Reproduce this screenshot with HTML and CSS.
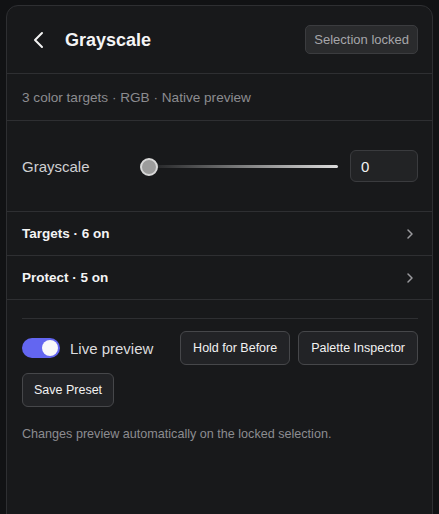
FILE: index.html
```
<!DOCTYPE html>
<html>
<head>
    <title>Grayscale</title>
    <link rel="stylesheet" href="styles.css">
</head>
<body>
    <div class="panel">
        <div class="header">
            <div class="header-left">
                <svg class="back" width="14" height="18" viewBox="0 0 14 18">
                    <path d="M10 2 L3 9 L10 16" fill="none" stroke="#f2f2f2" stroke-width="2" stroke-linecap="round" stroke-linejoin="round"/>
                </svg>
                <h1 class="title">Grayscale</h1>
            </div>
            <span class="badge">Selection locked</span>
        </div>

        <div class="meta">3 color targets · RGB · Native preview</div>

        <div class="slider-row">
            <span class="slider-label">Grayscale</span>
            <div class="slider">
                <div class="track"></div>
                <div class="thumb"></div>
            </div>
            <div class="value-box">0</div>
        </div>

        <div class="nav-row">
            <span>Targets · 6 on</span>
            <svg width="8" height="12" viewBox="0 0 8 12"><path d="M2 2 L6 6 L2 10" fill="none" stroke="#9a9a9e" stroke-width="1.5" stroke-linecap="round" stroke-linejoin="round"/></svg>
        </div>
        <div class="nav-row">
            <span>Protect · 5 on</span>
            <svg width="8" height="12" viewBox="0 0 8 12"><path d="M2 2 L6 6 L2 10" fill="none" stroke="#9a9a9e" stroke-width="1.5" stroke-linecap="round" stroke-linejoin="round"/></svg>
        </div>

        <div class="footer">
            <div class="actions">
                <label class="toggle-wrap">
                    <span class="toggle"><span class="knob"></span></span>
                    <span class="toggle-text">Live preview</span>
                </label>
                <button class="btn">Hold for Before</button>
                <button class="btn">Palette Inspector</button>
            </div>
            <div class="actions">
                <button class="btn btn-narrow">Save Preset</button>
            </div>
            <p class="hint">Changes preview automatically on the locked selection.</p>
        </div>
    </div>
</body>
</html>
```
FILE: styles.css
```
body {
    font-family: "Liberation Sans", Arial, sans-serif;
    background-color: #111214;
    margin: 0;
    padding: 5px 0 0 6px;
    height: 514px;
    box-sizing: border-box;
    overflow: hidden;
}

.panel {
    width: 427px;
    min-height: 530px;
    box-sizing: border-box;
    background-color: #18191b;
    border: 1px solid #2e2f32;
    border-radius: 12px;
}

.header {
    height: 67px;
    padding: 0 14px 0 25px;
    display: flex;
    align-items: center;
    justify-content: space-between;
    border-bottom: 1px solid #2e2f32;
}

.header-left {
    display: flex;
    align-items: center;
    gap: 19px;
}

.back {
    display: block;
}

.title {
    margin: 1px 0 0;
    font-size: 18px;
    font-weight: bold;
    color: #f4f4f5;
}

.badge {
    font-size: 13px;
    color: #a6a6aa;
    background-color: #2a2b2d;
    border: 1px solid #3b3c3f;
    border-radius: 5px;
    padding: 6px 8px;
    margin-top: -1px;
    white-space: nowrap;
}

.meta {
    height: 46px;
    padding: 0 15px;
    display: flex;
    align-items: center;
    font-size: 13.6px;
    color: #8c8c90;
    border-bottom: 1px solid #2e2f32;
}

.slider-row {
    height: 90px;
    padding: 0 14px 0 15px;
    display: flex;
    align-items: center;
    border-bottom: 1px solid #2e2f32;
}

.slider-label {
    width: 118px;
    font-size: 15px;
    color: #cfcfd2;
}

.slider {
    position: relative;
    width: 199px;
    height: 18px;
    margin-right: 11px;
}

.track {
    position: absolute;
    left: 8px;
    right: 1px;
    top: 8px;
    height: 3px;
    border-radius: 2px;
    background: linear-gradient(to right, #1f2022, #dcdcdc);
}

.thumb {
    position: absolute;
    left: 0;
    top: 1px;
    width: 14px;
    height: 14px;
    border-radius: 50%;
    background-color: #9c9c9c;
    border: 2px solid #d8d8d8;
}

.value-box {
    width: 68px;
    height: 32px;
    box-sizing: border-box;
    padding-left: 10px;
    display: flex;
    align-items: center;
    font-size: 15px;
    color: #f2f2f2;
    background-color: #222325;
    border: 1px solid #3a3b3e;
    border-radius: 6px;
}

.nav-row {
    height: 43px;
    padding: 0 18px 0 15px;
    display: flex;
    align-items: center;
    justify-content: space-between;
    font-size: 13.5px;
    font-weight: bold;
    color: #f4f4f5;
    border-bottom: 1px solid #2e2f32;
}

.footer {
    margin: 0 14px 0 15px;
    padding-top: 18px;
}

.footer::before {
    content: "";
    display: block;
    height: 1px;
    background-color: #2e2f32;
    margin-bottom: 12px;
}

.actions {
    display: flex;
    align-items: center;
    gap: 8px;
    margin-bottom: 8px;
}

.toggle-wrap {
    display: flex;
    align-items: center;
    gap: 10px;
    margin-right: auto;
    white-space: nowrap;
}

.toggle {
    width: 38px;
    height: 20px;
    border-radius: 10px;
    background-color: #6366f1;
    display: flex;
    align-items: center;
    justify-content: flex-end;
    padding-right: 2px;
    box-sizing: border-box;
    flex-shrink: 0;
}

.knob {
    width: 16px;
    height: 16px;
    border-radius: 50%;
    background-color: #f8f8fa;
}

.toggle-text {
    font-size: 15px;
    color: #dcdcde;
}

.btn {
    font-family: "Liberation Sans", Arial, sans-serif;
    font-size: 12.5px;
    color: #f2f2f2;
    background-color: #222326;
    border: 1px solid #46474a;
    border-radius: 6px;
    height: 34px;
    padding: 0 12px;
    white-space: nowrap;
}

.btn-narrow {
    padding: 0 11px;
}

.hint {
    margin: 20px 0 0;
    font-size: 12.6px;
    color: #8c8c90;
}
```
